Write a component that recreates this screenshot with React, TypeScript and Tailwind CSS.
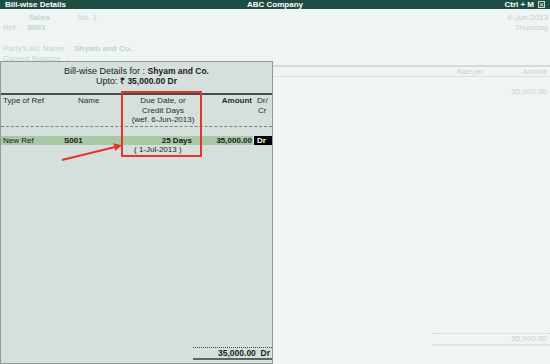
import React from "react";

const font = { fontFamily: '"Liberation Sans", Arial, sans-serif' };

export default function App() {
  return (
    <div
      className="relative w-[550px] h-[364px] overflow-hidden bg-[#eef5f3] flex flex-col text-[8px]"
      style={font}
    >
      {/* Title bar */}
      <div className="h-[9px] bg-[#1e4d43] flex items-center text-white font-bold text-[8px] leading-[9px] px-[5px] relative">
        <span>Bill-wise Details</span>
        <span className="absolute left-[247px]">ABC Company</span>
        <span className="ml-auto mr-[4px]">Ctrl + M</span>
        <span className="w-[7px] h-[7px] border border-[#cfd8d5] flex items-center justify-center text-[6px] leading-[6px] font-normal">
          ✕
        </span>
      </div>

      {/* Voucher screen (faded behind the panel) */}
      <div className="flex-1 flex flex-col text-[#c7d2cf] text-[8px] leading-[10px]">
        <div className="flex pt-[4px] pr-[2px]">
          <div className="flex flex-col">
            <div className="flex">
              <span className="pl-[29px] w-[78px] font-bold">Sales</span>
              <span>No. 1</span>
            </div>
            <div className="flex pl-[3px]">
              <span className="w-[16px]">Ref.</span>
              <span className="w-[8px]">:</span>
              <span className="font-bold">S001</span>
            </div>
          </div>
          <div className="ml-auto flex flex-col items-end">
            <span>6-Jun-2013</span>
            <span>Thursday</span>
          </div>
        </div>
        <div className="flex flex-col pl-[3px] mt-[11px]">
          <div className="flex">
            <span className="w-[64px]">Party's A/c Name</span>
            <span className="w-[7px]">:</span>
            <span className="font-bold">Shyam and Co.</span>
          </div>
          <div className="flex">
            <span className="w-[64px]">Current Balance</span>
            <span className="w-[7px]">:</span>
          </div>
        </div>
        <div className="h-[2px] border-t border-b border-[#d3dcd9] mt-[1px]" />
        <div className="flex items-center h-[9px] text-[7px] pr-[3px]">
          <span className="ml-auto w-[16px]">Rate</span>
          <span className="w-[50px]">per</span>
          <span>Amount</span>
        </div>
        <div className="border-t border-[#d9e2df]" />
        <div className="flex justify-end pr-[3px] mt-[10px]">
          <span>35,000.00</span>
        </div>
        <div className="mt-auto mb-[18px] ml-auto w-[118px] flex flex-col">
          <div className="border-t border-dotted border-[#c9d3d0]" />
          <div className="h-[10px] flex items-center justify-end pr-[3px] text-[8px]">35,000.00</div>
          <div className="border-t-2 border-[#dfe6e4]" />
        </div>
      </div>

      {/* Bill-wise Details panel (overlay window) */}
      <div className="absolute left-0 top-[61px] w-[273px] h-[303px] bg-[#d5e0dc] border border-[#8e9c98] flex flex-col text-[#1a1a1a]">
        {/* Header */}
        <div className="flex flex-col items-center pt-[4px] text-[9px] leading-[10px]">
          <div>
            <span>Bill-wise Details for : </span>
            <span className="font-bold text-[8.5px]">Shyam and Co.</span>
          </div>
          <div>
            <span>Upto: </span>
            <span className="font-bold text-[8.5px]">₹ 35,000.00 Dr</span>
          </div>
        </div>
        <div className="mt-[7px] h-[2px] bg-[#4a4f4d]" />

        {/* Column headers */}
        <div className="grid grid-cols-[63px_57px_80px_52px_19px] text-[8px] leading-[9.5px] text-[#2a2a2a] pt-[1px]">
          <div className="pl-[2px]">Type of Ref</div>
          <div className="pl-[14px]">Name</div>
          <div className="flex flex-col items-center pl-[4px]">
            <span>Due Date, or</span>
            <span>Credit Days</span>
            <span>(wef. 6-Jun-2013)</span>
          </div>
          <div className="text-right font-bold pr-[1px]">Amount</div>
          <div className="flex flex-col pl-[4px]">
            <span>Dr/</span>
            <span className="pl-[1px]">Cr</span>
          </div>
        </div>
        <div className="mt-[1px] border-t border-dashed border-[#7d8784]" />

        {/* Entry row */}
        <div className="mt-[9px] grid grid-cols-[63px_57px_80px_52px_19px] h-[9px] items-center text-[8px] leading-[9px]">
          <div className="bg-[#a9c8a4] h-full pl-[2px]">New Ref</div>
          <div className="bg-[#a9c8a4] h-full font-bold">S001</div>
          <div className="bg-[#a9c8a4] h-full font-bold text-right pr-[9px]">25 Days</div>
          <div className="bg-[#a9c8a4] h-full font-bold text-right pr-[1px]">35,000.00</div>
          <div className="bg-black h-full ml-[1px] text-white font-bold pl-[3px]">Dr</div>
        </div>
        <div className="grid grid-cols-[63px_57px_80px_52px_19px] text-[8px] leading-[9px]">
          <div />
          <div />
          <div className="pl-[13px]">( 1-Jul-2013 )</div>
        </div>

        {/* Total */}
        <div className="mt-auto mb-[3px] ml-auto w-[79px] flex flex-col">
          <div className="border-t border-dotted border-[#3f4543]" />
          <div className="h-[10px] flex items-center justify-end pr-[2px] font-bold text-[8.5px] leading-[10px]">
            35,000.00&nbsp;&nbsp;Dr
          </div>
          <div className="h-[2px] bg-[#5d6462]" />
        </div>

        {/* Red highlight box */}
        <div className="absolute left-[120px] top-[29px] w-[81px] h-[66px] border-2 border-[#e8322c]" />

        {/* Red arrow */}
        <svg
          className="absolute left-0 top-0"
          width="273"
          height="120"
          viewBox="0 0 273 120"
        >
          <line x1="61" y1="98" x2="114" y2="85" stroke="#e8322c" strokeWidth="2" />
          <polygon points="121,83.2 112.3,81.3 114.3,89.0" fill="#e8322c" />
        </svg>
      </div>
    </div>
  );
}
